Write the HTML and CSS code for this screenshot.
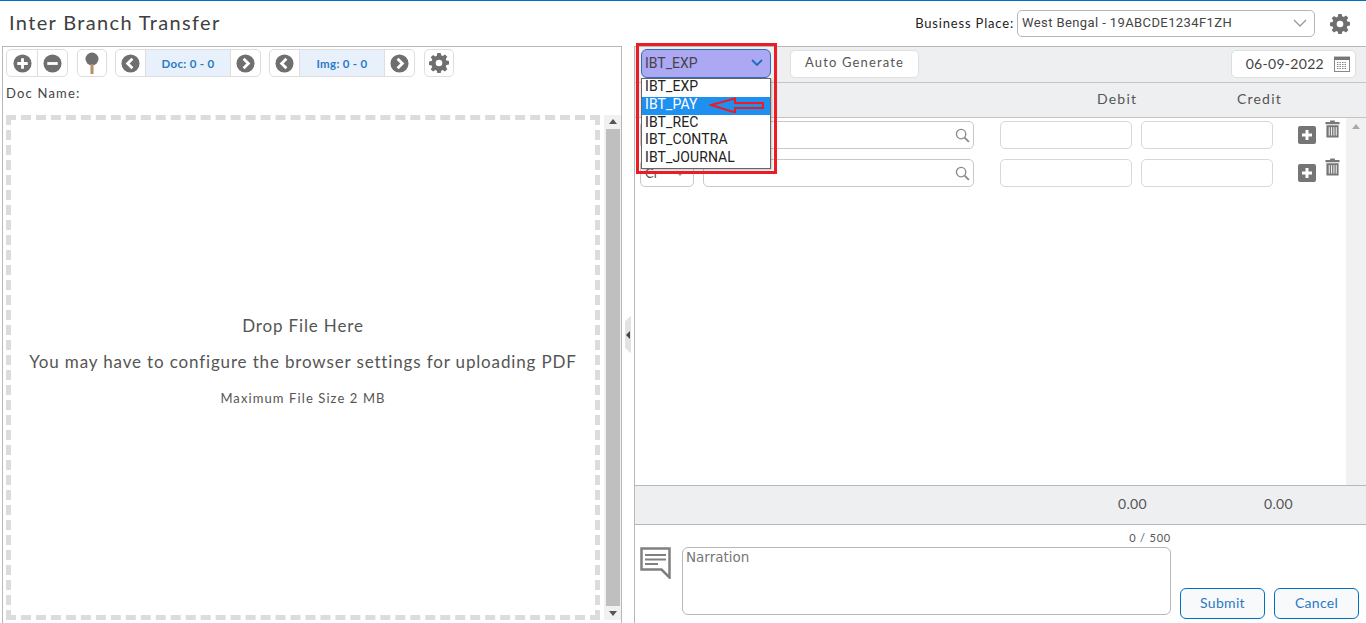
FILE: index.html
```html
<!DOCTYPE html>
<html lang="en">
<head>
<meta charset="utf-8">
<title>Inter Branch Transfer</title>
<link rel="stylesheet" href="styles.css">
</head>
<body>
<svg class="defs" width="0" height="0" aria-hidden="true">
  <defs>
    <symbol id="gear" viewBox="0 0 24 24"><path fill="#6f6f6f" fill-rule="evenodd" d="M10 1h4l.6 3.1 1.9.8L19.1 3 22 5.900l-1.900 2.600.8 1.900 3.100.6v4l-3.100.6-.8 1.900L22 20.700 19.100 23.600l-2.600-1.900-1.900.8L14 25.600h-4l-.6-3.100-1.900-.8-2.600 1.900L2 20.700l1.900-2.600-.8-1.900L0 15.600V11.600l3.100-.6.800-1.900L2 6.500 4.900 3.600l2.600 1.900 1.900-.8z" transform="translate(0 -1.300)"/><circle cx="12" cy="12" r="4" fill="#fff"/></symbol>
    <symbol id="prev" viewBox="0 0 20 20"><circle cx="10" cy="10" r="9.500" fill="#6f6f6f"/><path d="M12 5l-5 5 5 5" fill="none" stroke="#fff" stroke-width="3"/></symbol>
    <symbol id="next" viewBox="0 0 20 20"><circle cx="10" cy="10" r="9.500" fill="#6f6f6f"/><path d="M8 5l5 5-5 5" fill="none" stroke="#fff" stroke-width="3"/></symbol>
    <symbol id="search" viewBox="0 0 16 16"><circle cx="6.500" cy="6.500" r="5" fill="none" stroke="#8a8a8a" stroke-width="1.400"/><path d="M10.200 10.200l4.600 4.600" stroke="#8a8a8a" stroke-width="2"/></symbol>
    <symbol id="plus" viewBox="0 0 18 18"><rect width="18" height="18" rx="2" fill="#757575"/><path d="M9 4v10M4 9h10" stroke="#fff" stroke-width="3"/></symbol>
    <symbol id="trash" viewBox="0 0 16 18"><path fill="#777" d="M5.500 0h5v1.500h5V4H.5V1.500h5zM1.500 5h13v13h-13z"/><path d="M4.500 7v9M7 7v9M9.500 7v9M12 7v9" stroke="#fff" stroke-width="1"/></symbol>
    <symbol id="small-chev" viewBox="0 0 10 6"><path d="M1 1l4 4 4-4" fill="none" stroke="#999" stroke-width="1.300"/></symbol>
  </defs>
</svg>
<div class="app">
  <header class="header">
    <h1 class="title">Inter Branch Transfer</h1>
    <div class="place">
      <label class="place-label">Business Place:</label>
      <div class="place-select">
        <span>West Bengal - 19ABCDE1234F1ZH</span>
        <svg class="chev" width="14" height="8" viewBox="0 0 14 8"><path d="M1 1l6 6 6-6" fill="none" stroke="#999" stroke-width="1.300"/></svg>
      </div>
      <svg class="head-gear" width="20" height="20"><use href="#gear"/></svg>
    </div>
  </header>
  <main class="main">
    <section class="left">
      <div class="tools">
        <div class="group">
          <span class="tool tool-zoom"><svg width="19" height="19" viewBox="0 0 20 20"><circle cx="10" cy="10" r="9.500" fill="#6f6f6f"/><path d="M10 4.500v11M4.500 10h11" stroke="#fff" stroke-width="3"/></svg></span>
          <span class="tool tool-zoom"><svg width="19" height="19" viewBox="0 0 20 20"><circle cx="10" cy="10" r="9.500" fill="#6f6f6f"/><path d="M4.500 10h11" stroke="#fff" stroke-width="3"/></svg></span>
        </div>
        <div class="group group-spaced">
          <span class="tool tool-pin"><svg width="14" height="22" viewBox="0 0 14 22"><circle cx="7" cy="7" r="6.500" fill="#6f6f6f"/><rect x="5.500" y="12" width="3" height="10" fill="#b5906a"/></svg></span>
        </div>
        <div class="group">
          <span class="tool tool-nav"><svg width="19" height="19"><use href="#prev"/></svg></span>
          <span class="counter">Doc: 0 - 0</span>
          <span class="tool tool-nav tool-end"><svg width="19" height="19"><use href="#next"/></svg></span>
        </div>
        <div class="group">
          <span class="tool tool-nav"><svg width="19" height="19"><use href="#prev"/></svg></span>
          <span class="counter">Img: 0 - 0</span>
          <span class="tool tool-nav tool-end"><svg width="19" height="19"><use href="#next"/></svg></span>
        </div>
        <div class="group group-spaced">
          <span class="tool tool-cog"><svg width="20" height="20"><use href="#gear"/></svg></span>
        </div>
      </div>
      <div class="doc-name">Doc Name:</div>
      <div class="viewer">
        <div class="dropzone">
          <p class="drop-main">Drop File Here</p>
          <p class="drop-main">You may have to configure the browser settings for uploading PDF</p>
          <p class="drop-small">Maximum File Size 2 MB</p>
        </div>
        <div class="scrollbar">
          <i class="arrow-up"></i>
          <div class="thumb"></div>
          <i class="arrow-down"></i>
        </div>
      </div>
    </section>
    <div class="splitter"><span class="handle"><i></i></span></div>
    <section class="right">
      <div class="bar">
        <div class="type-select">
          <span>IBT_EXP</span>
          <svg width="12" height="7" viewBox="0 0 12 7"><path d="M1 1l5 5 5-5" fill="none" stroke="#1a6fc0" stroke-width="1.800"/></svg>
        </div>
        <button class="auto" type="button">Auto Generate</button>
        <div class="date">
          <span>06-09-2022</span>
          <svg width="16" height="16" viewBox="0 0 16 16"><rect x=".5" y="1" width="15" height="14.500" fill="#fff" stroke="#888"/><rect x="0" y="1" width="16" height="3" fill="#777"/><path d="M3 6.500h10M3 8.500h10M3 10.500h10M3 12.500h10" stroke="#888" stroke-dasharray="1.500 1"/></svg>
        </div>
      </div>
      <div class="columns">
        <span class="col-debit">Debit</span>
        <span class="col-credit">Credit</span>
      </div>
      <div class="rows">
        <div class="rows-list">
          <div class="row">
            <span class="field field-type"><span></span><svg width="10" height="6"><use href="#small-chev"/></svg></span>
            <span class="field field-account"><svg width="15" height="15"><use href="#search"/></svg></span>
            <span class="field field-amount"></span>
            <span class="field field-amount"></span>
            <svg class="row-add" width="18" height="18"><use href="#plus"/></svg>
            <svg class="row-del" width="15" height="18"><use href="#trash"/></svg>
          </div>
          <div class="row">
            <span class="field field-type"><span>Cr</span><svg width="10" height="6"><use href="#small-chev"/></svg></span>
            <span class="field field-account"><svg width="15" height="15"><use href="#search"/></svg></span>
            <span class="field field-amount"></span>
            <span class="field field-amount"></span>
            <svg class="row-add" width="18" height="18"><use href="#plus"/></svg>
            <svg class="row-del" width="15" height="18"><use href="#trash"/></svg>
          </div>
        </div>
        <div class="rows-scroll"><i class="arrow-up arrow-light"></i></div>
      </div>
      <div class="totals">
        <span class="total-debit">0.00</span>
        <span class="total-credit">0.00</span>
      </div>
      <div class="footer">
        <svg class="note-icon" width="31" height="32" viewBox="0 0 31 32"><path d="M1.500 1.500h28v29l-8-8h-20z" fill="none" stroke="#808080" stroke-width="2.500"/><path d="M5 8h21M5 12.500h21M5 17h13" stroke="#808080" stroke-width="2"/></svg>
        <div class="narration">
          <div class="count">0 / 500</div>
          <div class="narr-box">Narration</div>
        </div>
        <div class="actions">
          <button class="btn" type="button">Submit</button>
          <button class="btn" type="button">Cancel</button>
        </div>
      </div>
    </section>
  </main>
</div>
<div class="highlight"></div>
<ul class="menu">
  <li>IBT_EXP</li>
  <li class="selected">IBT_PAY</li>
  <li>IBT_REC</li>
  <li>IBT_CONTRA</li>
  <li>IBT_JOURNAL</li>
</ul>
<svg class="red-arrow" width="56" height="16" viewBox="0 0 56 16"><path d="M2 8l24-6.500v4.500h28v5h-28v4.500z" fill="none" stroke="#ed1c24" stroke-width="2"/></svg>
</body>
</html>
```

FILE: styles.css
```css
* { box-sizing: border-box; }
html, body { margin: 0; height: 623px; overflow: hidden; }
body { background: #fff; color: #444; font-family: Lato, "Liberation Sans", sans-serif; position: relative; }
.defs { position: absolute; }
.app { display: flex; flex-direction: column; height: 623px; border-top: 1px solid #0070c0; }

.header { height: 45px; display: flex; align-items: center; justify-content: space-between; padding: 0 16px 0 9px; flex: none; }
.title { margin: 0 0 3px; font-size: 20px; font-weight: 400; letter-spacing: 1.35px; color: #404040; }
.place { display: flex; align-items: center; }
.place-label { font-size: 13px; letter-spacing: .82px; color: #222; margin: 0 3px 2px 0; }
.place-select { width: 298px; height: 27px; border: 1px solid #b5b5b5; border-radius: 5px; display: flex; align-items: center; justify-content: space-between; padding: 0 7px 2px 4px; font-size: 13px; letter-spacing: .4px; color: #444; font-family: Roboto, sans-serif; }
.chev { margin-top: 1px; }
.head-gear { margin-left: 15px; }

.main { flex: 1; display: flex; min-height: 0; }
.left { width: 620px; flex: none; margin-left: 2px; border: 1px solid #b8b8b8; border-width: 1px 1px 0 1px; display: flex; flex-direction: column; padding: 2px 0 0 3px; }
.tools { display: flex; gap: 8px; height: 28px; flex: none; }
.group { display: flex; height: 28px; border: 1px solid #dedede; border-radius: 5px; background: #fff; }
.group-spaced { margin-left: 1px; }
.tool { display: flex; align-items: center; justify-content: center; height: 100%; }
.tool-zoom { width: 30px; }
.tool-zoom + .tool-zoom { border-left: 1px solid #dedede; }
.tool-pin { width: 28px; }
.tool-nav { width: 30px; border-right: 1px solid #dedede; }
.tool-end { border-right: 0; border-left: 1px solid #dedede; }
.tool-cog { width: 28px; }
.counter { width: 84px; background: #e8f1fb; color: #2a7ac4; font-size: 11.500px; font-weight: 700; letter-spacing: .3px; display: flex; align-items: center; justify-content: center; }
.doc-name { font-size: 13px; letter-spacing: 1.2px; color: #444; height: 20px; margin-top: 8px; flex: none; }
.viewer { flex: 1; display: flex; min-height: 0; margin-top: 10px; }
.dropzone { width: 594px; height: 505px; border: 5px dashed #dcdcdc; display: flex; flex-direction: column; align-items: center; color: #555; padding-top: 196px; }
.drop-main { margin: 0 0 16px; font-size: 17px; line-height: 20px; letter-spacing: .85px; white-space: nowrap; }
.drop-small { margin: 0; font-size: 13px; line-height: 20px; letter-spacing: 1.1px; }
.scrollbar { width: 17px; margin-left: 4px; height: 505px; background: #f1f1f1; display: flex; flex-direction: column; align-items: center; justify-content: space-between; padding: 4px 0; }
.thumb { width: 14px; flex: 1; background: #bfbfbf; margin: 5px 0; }
.arrow-up { width: 0; height: 0; border: 4px solid transparent; border-top: 0; border-bottom: 5px solid #555; }
.arrow-down { width: 0; height: 0; border: 4px solid transparent; border-bottom: 0; border-top: 5px solid #555; }
.arrow-light { border-bottom-color: #aaa; }

.splitter { width: 12px; flex: none; display: flex; align-items: center; }
.handle { width: 6px; height: 38px; margin-left: 3px; background: #e2e2e2; clip-path: polygon(0 15%, 100% 0, 100% 100%, 0 85%); display: flex; align-items: center; justify-content: center; }
.handle i { width: 0; height: 0; border: 4px solid transparent; border-left: 0; border-right: 4px solid #444; }

.right { flex: 1; min-width: 0; display: flex; flex-direction: column; border-left: 1px solid #b8b8b8; border-top: 1px solid #b8b8b8; }
.bar { height: 36px; flex: none; background: #eeeff1; border-bottom: 1px solid #c4c4c4; display: flex; align-items: center; padding: 0 10px 2px 6px; }
.type-select { width: 130px; height: 29px; background: #aca8f4; border: 1px solid #2a6fb5; border-radius: 6px; display: flex; align-items: center; justify-content: space-between; padding: 0 7px 2px 3px; font-family: Roboto, sans-serif; font-size: 14px; color: #444; }
.auto { width: 129px; height: 28px; margin-left: 19px; background: #fff; border: 1px solid #e0e0e0; border-radius: 5px; font: 13px Lato, sans-serif; letter-spacing: 1.15px; color: #555; padding: 0 0 3px; }
.date { width: 125px; height: 28px; margin-left: auto; background: #fff; border: 1px solid #dedede; border-radius: 5px; display: flex; align-items: center; justify-content: flex-end; gap: 10px; padding-right: 5px; font-size: 14px; letter-spacing: .3px; color: #444; }
.columns { height: 35px; flex: none; background: #eeeff1; border-bottom: 1px solid #c4c4c4; display: flex; align-items: center; font-size: 14px; letter-spacing: 1.2px; color: #555; padding: 0 0 3px 462px; }
.col-debit { width: 140px; }
.rows { flex: 1; min-height: 0; display: flex; }
.rows-list { flex: 1; padding: 3px 0 0 5px; }
.row { display: flex; align-items: flex-start; height: 38px; }
.field { display: flex; align-items: center; height: 28px; border: 1px solid #d8d8d8; border-radius: 5px; background: #fff; }
.field-type { width: 54px; border-color: #c8c8c8; font-size: 13px; padding: 0 8px 0 4px; color: #555; justify-content: space-between; }
.field-account { width: 271px; margin-left: 9px; border-color: #c8c8c8; justify-content: flex-end; padding-right: 3px; }
.field-amount { width: 132px; margin-left: 9px; }
.field-account + .field-amount { margin-left: 26px; }
.row-add { margin: 5px 0 0 25px; }
.row-del { margin: -1px 0 0 9px; }
.rows-scroll { width: 20px; background: #f1f1f1; display: flex; justify-content: center; padding-top: 6px; }
.totals { height: 40px; flex: none; background: #eeeff1; border-top: 1px solid #b8b8b8; border-bottom: 1px solid #b8b8b8; display: flex; align-items: center; font-size: 14px; letter-spacing: .3px; color: #555; padding: 0 0 3px 483px; }
.total-debit { width: 146px; }
.footer { height: 98px; flex: none; display: flex; padding-left: 5px; }
.note-icon { margin-top: 22px; flex: none; }
.narration { width: 489px; margin-left: 11px; padding-top: 6px; }
.count { font-size: 11px; letter-spacing: .8px; text-align: right; height: 16px; color: #555; line-height: 14px; }
.narr-box { height: 68px; border: 1px solid #b8b8b8; border-radius: 6px; padding: 0 3px; font: 13.5px/18px "DejaVu Sans", sans-serif; color: #777; }
.actions { display: flex; gap: 9px; margin: 63px 0 0 9px; }
.btn { width: 85px; height: 31px; background: #f8f9fa; border: 1px solid #0070c0; border-radius: 6px; font: 14px Lato, sans-serif; letter-spacing: .3px; color: #2a78c4; padding: 0 0 2px; }

.highlight { position: absolute; left: 636px; top: 43px; width: 141px; height: 131px; border: 3px solid #ed1c24; }
.menu { position: absolute; left: 641px; top: 78px; width: 130px; height: 91px; margin: 0; padding: 0; list-style: none; background: #fff; border: 1px solid #666; font-family: Roboto, sans-serif; font-size: 14px; letter-spacing: .1px; color: #222; box-shadow: 1px 1px 2px rgba(0,0,0,.25); }
.menu li { height: 17.8px; line-height: 15px; padding-left: 3px; }
.menu li.selected { background: #1e90f0; color: #fff; }
.red-arrow { position: absolute; left: 709px; top: 97px; }
```
